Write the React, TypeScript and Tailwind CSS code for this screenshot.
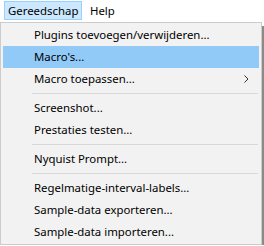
type Item = { label: string; active?: boolean; sub?: boolean } | "sep";

const items: Item[] = [
  { label: "Plugins toevoegen/verwijderen..." },
  { label: "Macro's...", active: true },
  { label: "Macro toepassen...", sub: true },
  "sep",
  { label: "Screenshot..." },
  { label: "Prestaties testen..." },
  "sep",
  { label: "Nyquist Prompt..." },
  "sep",
  { label: "Regelmatige-interval-labels..." },
  { label: "Sample-data exporteren..." },
  { label: "Sample-data importeren..." },
];

export default function App() {
  return (
    <div
      className="h-[246px] w-[264px] overflow-hidden bg-white text-[11.4px] text-black"
      style={{ fontFamily: '"Noto Sans", "Segoe UI", sans-serif' }}
    >
      {/* menubar */}
      <div className="flex h-[22px] items-start pl-[4px] pt-[1px]">
        <div className="flex h-[19px] w-[78px] items-center border border-[#99d1ff] bg-[#cce8ff] pl-[3px]">
          Gereedschap
        </div>
        <div className="flex h-[19px] items-center pl-[8px]">Help</div>
      </div>

      {/* dropdown */}
      <div className="flex">
        <div className="w-[262px] border border-[#cccccc] bg-[#f2f2f2] px-[2px] py-[1px]">
          {items.map((it, i) =>
            it === "sep" ? (
              <div key={i} className="flex h-[7px] items-center pl-[29px] pr-[1px]">
                <div className="h-px w-full bg-[#d7d7d7]" />
              </div>
            ) : (
              <div
                key={i}
                className={`flex h-[22px] items-center pl-[31px] pr-[8px] ${
                  it.active ? "bg-[#91c9f7]" : ""
                }`}
              >
                <span className="flex-1 pb-[1px]">{it.label}</span>
                {it.sub && (
                  <svg width="5" height="8" viewBox="0 0 5 8" className="mr-[2px]">
                    <path d="M0.5 0.5 L4 4 L0.5 7.5" fill="none" stroke="#333" strokeWidth="1" />
                  </svg>
                )}
              </div>
            )
          )}
        </div>
        <div className="mt-[4px] w-[2px] bg-[#8a8a8a]" />
      </div>
    </div>
  );
}
